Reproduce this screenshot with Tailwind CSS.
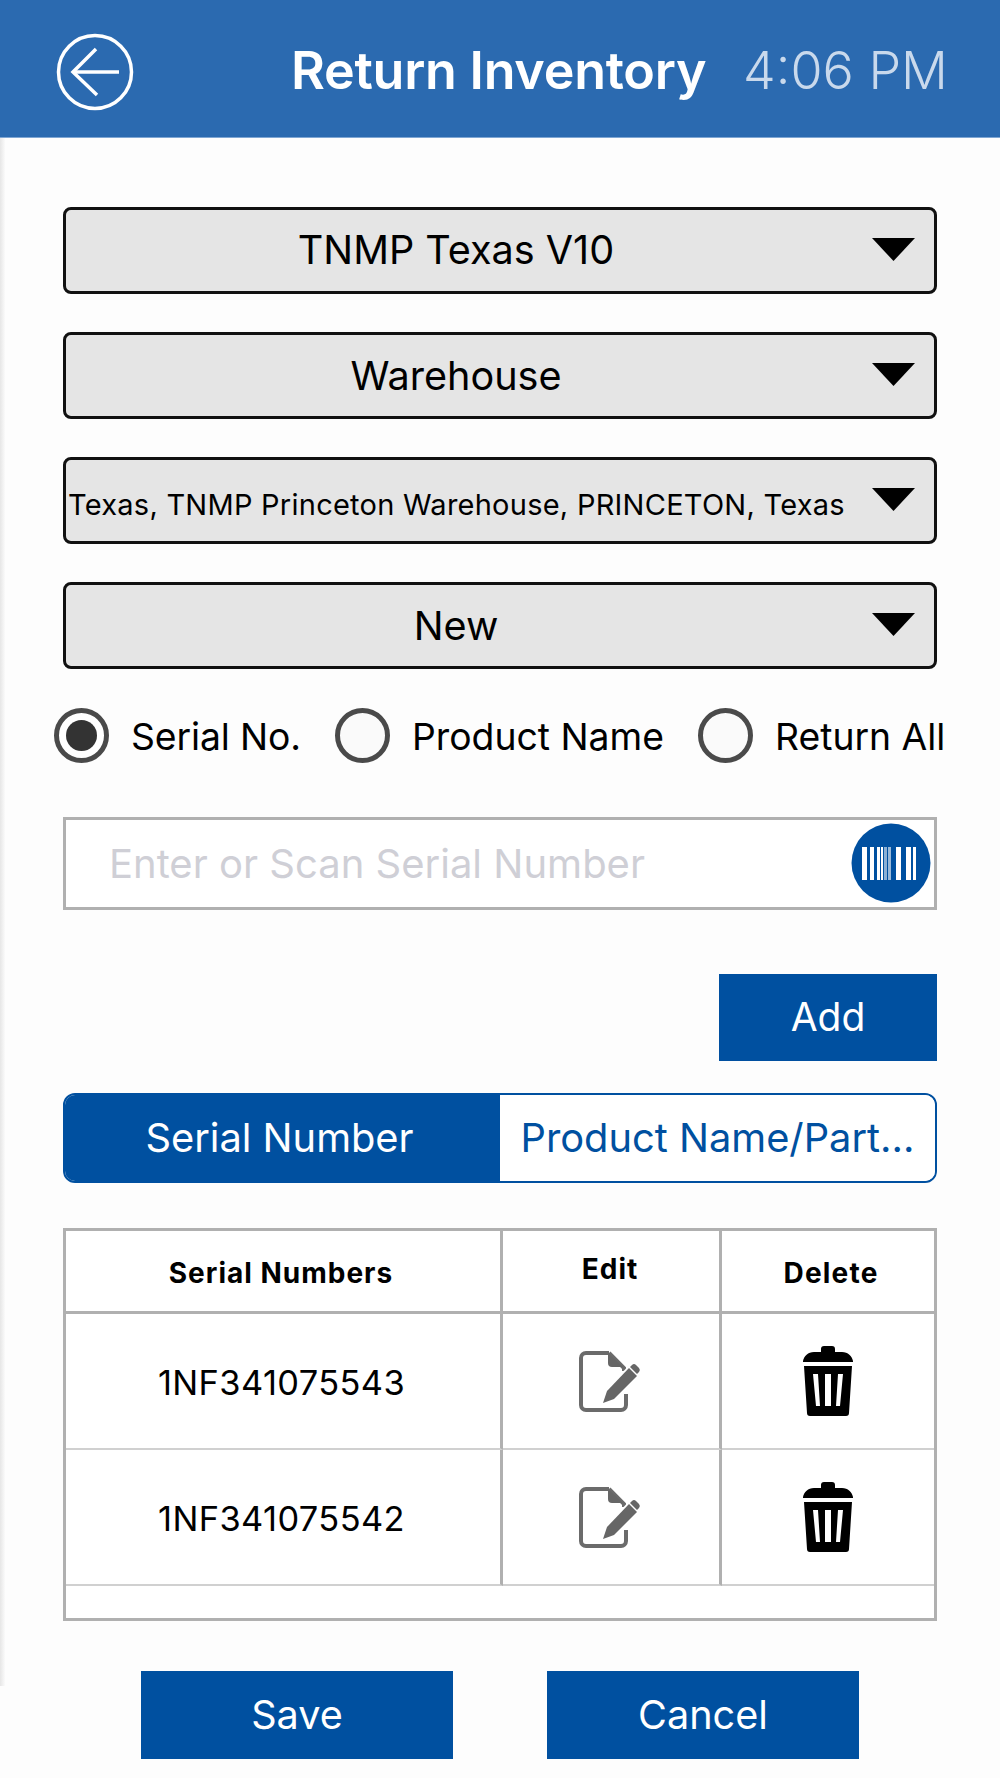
<!DOCTYPE html>
<html><head><meta charset="utf-8">
<script src="https://cdn.jsdelivr.net/npm/@tailwindcss/browser@4"></script>
</head>
<body class="bg-white">
<div class="relative w-[1000px] h-[1778px] overflow-hidden bg-[#fdfdfd] font-['Inter',sans-serif] text-black">
  <div class="absolute left-0 top-[138px] w-[6px] h-[1548px] bg-gradient-to-r from-[#e6e6e6] to-white"></div>
  <header class="relative h-[138px] bg-[#2b6ab0] flex items-center border-b border-[#7fa6d3] text-white">
    <svg class="absolute left-[55px] top-[32px]" width="80" height="80" viewBox="0 0 80 80" fill="none" stroke="#fff"><circle cx="40" cy="40" r="36.5" stroke-width="3.5"/><path d="M41 17 L18 40 L42 63" stroke-width="3.5"/><path d="M18 40 H64" stroke-width="3.5"/></svg>
    <h1 class="absolute left-[291px] top-[42px] text-[52px] leading-[58px] font-semibold tracking-[-0.25px] whitespace-nowrap">Return Inventory</h1>
    <span class="absolute left-[743px] top-[42px] text-[52px] leading-[58px] font-light text-[#c9d9ec] whitespace-nowrap">4:06 PM</span>
  </header>

  <main class="relative pl-[63px] w-[937px]">
    <div class="pt-[69px] flex flex-col gap-[38px]">
      <div class="relative h-[87px] rounded-[8px] border-[3px] border-[#111] bg-[#e5e5e5] flex items-center justify-center pr-[88px] pt-[1px] text-[39.6px]">TNMP Texas V10<svg class="absolute right-[19px] top-[28px]" width="43" height="23" viewBox="0 0 43 23"><path d="M0 0H43L21.5 23Z" fill="#000"/></svg></div>
      <div class="relative h-[87px] rounded-[8px] border-[3px] border-[#111] bg-[#e5e5e5] flex items-center justify-center pr-[88px] pt-[2px] text-[39.6px]">Warehouse<svg class="absolute right-[19px] top-[28px]" width="43" height="23" viewBox="0 0 43 23"><path d="M0 0H43L21.5 23Z" fill="#000"/></svg></div>
      <div class="relative h-[87px] rounded-[8px] border-[3px] border-[#111] bg-[#e5e5e5] flex items-center pl-[2px] pt-[8px] text-[29px] whitespace-nowrap tracking-[0.25px]">Texas, TNMP Princeton Warehouse, PRINCETON, Texas<svg class="absolute right-[19px] top-[28px]" width="43" height="23" viewBox="0 0 43 23"><path d="M0 0H43L21.5 23Z" fill="#000"/></svg></div>
      <div class="relative h-[87px] rounded-[8px] border-[3px] border-[#111] bg-[#e5e5e5] flex items-center justify-center pr-[88px] pt-[2px] text-[39.6px]">New<svg class="absolute right-[19px] top-[28px]" width="43" height="23" viewBox="0 0 43 23"><path d="M0 0H43L21.5 23Z" fill="#000"/></svg></div>
    </div>

    <div class="relative h-[148px] text-[37.3px]">
      <div class="absolute left-[-9px] top-[39px] size-[55px] rounded-full border-[5px] border-[#4a4a4a] bg-white flex items-center justify-center"><span class="size-[31px] rounded-full bg-[#333]"></span></div>
      <span class="absolute left-[68px] top-[46px] leading-[44px] whitespace-nowrap tracking-[-0.1px]">Serial No.</span>
      <div class="absolute left-[272px] top-[39px] size-[55px] rounded-full border-[5px] border-[#4a4a4a] bg-[#fafafa]"></div>
      <span class="absolute left-[349px] top-[46px] leading-[44px] whitespace-nowrap">Product Name</span>
      <div class="absolute left-[635px] top-[39px] size-[55px] rounded-full border-[5px] border-[#4a4a4a] bg-[#fafafa]"></div>
      <span class="absolute left-[712px] top-[46px] leading-[44px] whitespace-nowrap">Return All</span>
    </div>

    <div class="relative h-[93px] border-[3px] border-[#b0b0b0] bg-white flex items-center pl-[43px] text-[40px] text-[#cfcfd6]">Enter or Scan Serial Number
      <svg class="absolute right-[3px] top-[3px]" width="80" height="80" viewBox="0 0 80 80"><circle cx="40" cy="40" r="39.5" fill="#0050a0"/><g fill="#fff"><rect x="11" y="24" width="5" height="33"/><rect x="19" y="24" width="4" height="33"/><rect x="26" y="24" width="3" height="33"/><rect x="30" y="24" width="2" height="33"/><rect x="33" y="24" width="3" height="33" opacity=".55"/><rect x="37" y="24" width="3" height="33" opacity=".6"/><rect x="45" y="24" width="5" height="33"/><rect x="55" y="24" width="5" height="33"/><rect x="62" y="24" width="3" height="33"/></g></svg>
    </div>

    <div class="pt-[64px] flex justify-end">
      <button class="w-[218px] h-[87px] bg-[#0050a0] text-white text-[39px]">Add</button>
    </div>

    <div class="mt-[32px] h-[90px] rounded-[12px] border-[2px] border-[#0050a0] flex overflow-hidden text-[39.8px]">
      <div class="w-[435px] bg-[#0050a0] text-white flex items-center justify-center pr-[6px]">Serial Number</div>
      <div class="flex-1 bg-white text-[#0050a0] flex items-center justify-center whitespace-nowrap">Product Name/Part...</div>
    </div>

    <div class="relative mt-[45px] h-[393px] border-[3px] border-[#b0b0b0] bg-white grid grid-cols-[437px_219px_1fr] grid-rows-[83px_136px_136px_1fr]">
      <div class="border-r-[3px] border-b-[3px] border-[#b0b0b0] flex items-center justify-center pt-[3px] pr-[4px] text-[28px] font-bold tracking-[1px]">Serial Numbers</div>
      <div class="border-r-[3px] border-b-[3px] border-[#b0b0b0] flex items-center justify-center pb-[4px] pr-[2px] text-[28px] font-bold tracking-[1px]">Edit</div>
      <div class="border-b-[3px] border-[#b0b0b0] flex items-center justify-center pl-[6px] pt-[3px] text-[28px] font-bold tracking-[1.2px]">Delete</div>

      <div class="border-r-[3px] border-b-2 border-r-[#b0b0b0] border-b-[#d0d0d0] flex items-center justify-center pt-[4px] pr-[3px] text-[34.4px] tracking-[0.4px]">1NF341075543</div>
      <div class="border-r-[3px] border-b-2 border-r-[#b0b0b0] border-b-[#d0d0d0] flex items-center justify-center pr-[2px]">
        <svg width="64" height="62" viewBox="0 0 64 62" fill="none"><path d="M31 3H8a5 5 0 0 0-5 5v47a5 5 0 0 0 5 5h35a5 5 0 0 0 5-5V44M31 3L46 18V21" stroke="#6b6b6b" stroke-width="4"/><path d="M30 3v10a4 4 0 0 0 4 4h11Z" fill="#666"/><path d="M33 45L57 20" stroke="#fff" stroke-width="15"/><path d="M25 53l4-12 22-23 8 8-23 23Z" fill="#666"/><path d="M52 17l2-2a3 3 0 0 1 4 0l3 3a3 3 0 0 1 0 4l-2 2Z" fill="#666"/></svg>
      </div>
      <div class="border-b-2 border-[#d0d0d0] flex items-center justify-center">
        <svg width="50" height="70" viewBox="0 0 50 70"><path d="M18 3q0-3 3-3h8q3 0 3 3v3h7c6 0 10 4 11 9v1H0v-1C1 10 5 6 11 6h7Z" fill="#000"/><path fill-rule="evenodd" d="M1 20h48l-3 47q0 3-3 3H7q-3 0-3-3ZM10 28l3 32h4l-2-32ZM22 28v32h6V28ZM35 28l-2 32h4l3-32Z" fill="#000"/></svg>
      </div>

      <div class="border-r-[3px] border-b-2 border-r-[#b0b0b0] border-b-[#d0d0d0] flex items-center justify-center pt-[4px] pr-[3px] text-[34.4px] tracking-[0.4px]">1NF341075542</div>
      <div class="border-r-[3px] border-b-2 border-r-[#b0b0b0] border-b-[#d0d0d0] flex items-center justify-center pr-[2px]">
        <svg width="64" height="62" viewBox="0 0 64 62" fill="none"><path d="M31 3H8a5 5 0 0 0-5 5v47a5 5 0 0 0 5 5h35a5 5 0 0 0 5-5V44M31 3L46 18V21" stroke="#6b6b6b" stroke-width="4"/><path d="M30 3v10a4 4 0 0 0 4 4h11Z" fill="#666"/><path d="M33 45L57 20" stroke="#fff" stroke-width="15"/><path d="M25 53l4-12 22-23 8 8-23 23Z" fill="#666"/><path d="M52 17l2-2a3 3 0 0 1 4 0l3 3a3 3 0 0 1 0 4l-2 2Z" fill="#666"/></svg>
      </div>
      <div class="border-b-2 border-[#d0d0d0] flex items-center justify-center">
        <svg width="50" height="70" viewBox="0 0 50 70"><path d="M18 3q0-3 3-3h8q3 0 3 3v3h7c6 0 10 4 11 9v1H0v-1C1 10 5 6 11 6h7Z" fill="#000"/><path fill-rule="evenodd" d="M1 20h48l-3 47q0 3-3 3H7q-3 0-3-3ZM10 28l3 32h4l-2-32ZM22 28v32h6V28ZM35 28l-2 32h4l3-32Z" fill="#000"/></svg>
      </div>
      <div class="col-span-3"></div>
    </div>

    <div class="pt-[50px] pl-[78px] flex gap-[94px]">
      <button class="w-[312px] h-[88px] bg-[#0050a0] text-white text-[39.6px] pt-[1px]">Save</button>
      <button class="w-[312px] h-[88px] bg-[#0050a0] text-white text-[39.6px] pt-[1px]">Cancel</button>
    </div>
  </main>
</div>
</body></html>
